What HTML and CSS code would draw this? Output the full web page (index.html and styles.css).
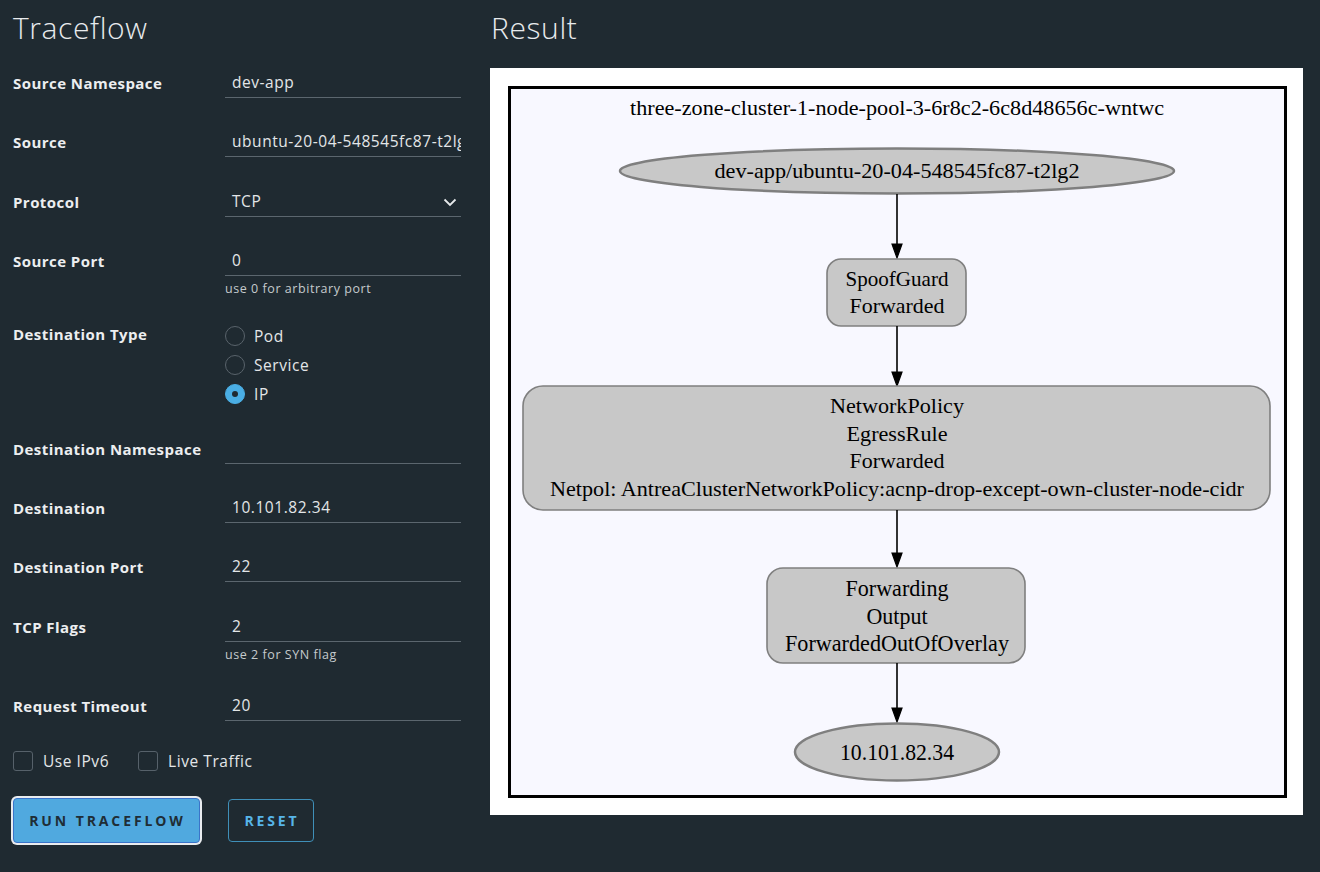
FILE: index.html
```html
<!DOCTYPE html>
<html>
<head>
<meta charset="utf-8">
<link rel="stylesheet" href="styles.css">
</head>
<body>
<div class="page">
  <section class="form-col">
    <h1 class="title">Traceflow</h1>
    <div class="form">
      <div class="row">
        <div class="label">Source Namespace</div>
        <div class="control"><div class="input">dev-app</div></div>
      </div>
      <div class="row">
        <div class="label">Source</div>
        <div class="control"><div class="input">ubuntu-20-04-548545fc87-t2lg2</div></div>
      </div>
      <div class="row">
        <div class="label">Protocol</div>
        <div class="control"><div class="input select">TCP
          <svg class="chevron" width="14" height="9" viewBox="0 0 14 9"><path d="M1.5 1.5 L7 7 L12.5 1.5" fill="none" stroke="#e6e9eb" stroke-width="1.8"/></svg>
        </div></div>
      </div>
      <div class="row">
        <div class="label">Source Port</div>
        <div class="control"><div class="input">0</div><div class="helper">use 0 for arbitrary port</div></div>
      </div>
      <div class="row radio-row">
        <div class="label">Destination Type</div>
        <div class="control radios">
          <div class="radio"><span class="dot"></span>Pod</div>
          <div class="radio"><span class="dot"></span>Service</div>
          <div class="radio checked"><span class="dot"></span>IP</div>
        </div>
      </div>
      <div class="row">
        <div class="label">Destination Namespace</div>
        <div class="control"><div class="input"></div></div>
      </div>
      <div class="row">
        <div class="label">Destination</div>
        <div class="control"><div class="input">10.101.82.34</div></div>
      </div>
      <div class="row">
        <div class="label">Destination Port</div>
        <div class="control"><div class="input">22</div></div>
      </div>
      <div class="row">
        <div class="label">TCP Flags</div>
        <div class="control"><div class="input">2</div><div class="helper">use 2 for SYN flag</div></div>
      </div>
      <div class="row">
        <div class="label">Request Timeout</div>
        <div class="control"><div class="input">20</div></div>
      </div>
      <div class="checks">
        <div class="check"><span class="box"></span>Use IPv6</div>
        <div class="check"><span class="box"></span>Live Traffic</div>
      </div>
      <div class="buttons">
        <button class="btn btn-primary">RUN TRACEFLOW</button>
        <button class="btn btn-outline">RESET</button>
      </div>
    </div>
  </section>
  <section class="result-col">
    <h1 class="title">Result</h1>
    <div class="panel">
      <svg class="graph" width="813" height="747" viewBox="0 0 813 747">
        <rect x="19.5" y="19.5" width="776" height="709" fill="#f8f8ff" stroke="#000" stroke-width="3"/>
        <g font-family="'Liberation Serif', 'Times New Roman', serif" font-size="21" fill="#000" text-anchor="middle">
          <text x="407" y="47" textLength="534" lengthAdjust="spacingAndGlyphs">three-zone-cluster-1-node-pool-3-6r8c2-6c8d48656c-wntwc</text>

          <ellipse cx="407" cy="103" rx="277" ry="22.5" fill="#c8c8c8" stroke="#7f7f7f" stroke-width="2.5"/>
          <text x="407" y="110" textLength="365" lengthAdjust="spacingAndGlyphs">dev-app/ubuntu-20-04-548545fc87-t2lg2</text>

          <line x1="407" y1="126" x2="407" y2="177" stroke="#000" stroke-width="1.6"/>
          <polygon points="402,176 412,176 407,190" fill="#000" stroke="#000" stroke-width="1.2"/>

          <rect x="337" y="191" width="139" height="67" rx="14" fill="#c8c8c8" stroke="#7f7f7f" stroke-width="1.6"/>
          <text x="407" y="218" textLength="103" lengthAdjust="spacingAndGlyphs">SpoofGuard</text>
          <text x="407" y="245" textLength="95" lengthAdjust="spacingAndGlyphs">Forwarded</text>

          <line x1="407" y1="258" x2="407" y2="305" stroke="#000" stroke-width="1.6"/>
          <polygon points="402,304 412,304 407,318" fill="#000" stroke="#000" stroke-width="1.2"/>

          <rect x="33" y="318" width="747" height="124" rx="20" fill="#c8c8c8" stroke="#7f7f7f" stroke-width="1.6"/>
          <text x="407" y="345" textLength="134" lengthAdjust="spacingAndGlyphs">NetworkPolicy</text>
          <text x="407" y="373" textLength="101" lengthAdjust="spacingAndGlyphs">EgressRule</text>
          <text x="407" y="400" textLength="95" lengthAdjust="spacingAndGlyphs">Forwarded</text>
          <text x="407" y="428" textLength="694" lengthAdjust="spacingAndGlyphs">Netpol: AntreaClusterNetworkPolicy:acnp-drop-except-own-cluster-node-cidr</text>

          <line x1="407" y1="442" x2="407" y2="486" stroke="#000" stroke-width="1.6"/>
          <polygon points="402,485 412,485 407,499" fill="#000" stroke="#000" stroke-width="1.2"/>

          <rect x="277" y="500" width="258" height="95" rx="16" fill="#c8c8c8" stroke="#7f7f7f" stroke-width="1.6"/>
          <text x="407" y="528" font-size="23" textLength="103" lengthAdjust="spacingAndGlyphs">Forwarding</text>
          <text x="407" y="556" font-size="23" textLength="61" lengthAdjust="spacingAndGlyphs">Output</text>
          <text x="407" y="583" font-size="23" textLength="224" lengthAdjust="spacingAndGlyphs">ForwardedOutOfOverlay</text>

          <line x1="407" y1="595" x2="407" y2="641" stroke="#000" stroke-width="1.6"/>
          <polygon points="402,640 412,640 407,654" fill="#000" stroke="#000" stroke-width="1.2"/>

          <ellipse cx="407" cy="684" rx="102" ry="28.5" fill="#c8c8c8" stroke="#7f7f7f" stroke-width="2.5"/>
          <text x="407" y="692" font-size="23" textLength="114" lengthAdjust="spacingAndGlyphs">10.101.82.34</text>
        </g>
      </svg>
    </div>
  </section>
</div>
</body>
</html>
```

FILE: styles.css
```css
* { box-sizing: border-box; }
html, body { margin: 0; padding: 0; }
body {
  background: #1f2a31;
  color: #e6e9eb;
  font-family: "Open Sans", "Liberation Sans", sans-serif;
  width: 1320px;
  height: 872px;
  overflow: hidden;
}
.page {
  display: flex;
  padding-left: 13px;
}
.form-col {
  width: 448px;
  flex: none;
}
.result-col {
  margin-left: 29px;
  flex: none;
}
.title {
  margin: 10px 0 0 0;
  height: 36px;
  line-height: 36px;
  font-size: 30px;
  font-weight: 300;
  color: #e8ebed;
  letter-spacing: 0.6px;
}
.result-col .title { margin-left: 1px; }
.form {
  margin-top: 22px;
  display: flex;
  flex-direction: column;
}
.row {
  display: grid;
  grid-template-columns: 212px 236px;
  margin-bottom: 29.3px;
}
.label {
  font-size: 15px;
  font-weight: 700;
  line-height: 30px;
  color: #eceef0;
  letter-spacing: 0.45px;
  white-space: nowrap;
}
.input {
  height: 30px;
  line-height: 29px;
  padding-left: 7px;
  padding-right: 3px;
  border-bottom: 1px solid #5b666e;
  font-size: 15.5px;
  letter-spacing: 0.55px;
  color: #e3e6e8;
  white-space: nowrap;
  overflow: hidden;
  position: relative;
}
.select .chevron {
  position: absolute;
  right: 4px;
  top: 11px;
}
.helper {
  margin-top: 6px;
  font-size: 12.5px;
  line-height: 14px;
  letter-spacing: 0.55px;
  color: #c5cacd;
}
.radio-row {
  margin-top: -4px;
  margin-bottom: 25.5px;
}
.radio-row .label { line-height: 27px; }
.radios { display: flex; flex-direction: column; }
.radio {
  height: 29px;
  display: flex;
  align-items: center;
  font-size: 15.5px;
  letter-spacing: 0.55px;
  color: #e3e6e8;
}
.radio .dot {
  width: 20px;
  height: 20px;
  border-radius: 50%;
  border: 1px solid #59636b;
  margin-right: 9px;
  flex: none;
  position: relative;
}
.radio.checked .dot {
  background: #4aaee4;
  border-color: #4aaee4;
}
.radio.checked .dot::after {
  content: "";
  position: absolute;
  left: 6px;
  top: 6px;
  width: 6px;
  height: 6px;
  border-radius: 50%;
  background: #1f2a31;
}
.checks {
  display: flex;
  height: 20px;
  margin-top: 0.5px;
}
.check {
  display: flex;
  align-items: center;
  font-size: 15.5px;
  letter-spacing: 0.55px;
  color: #e3e6e8;
  margin-right: 29px;
}
.check .box {
  width: 20px;
  height: 20px;
  border: 1px solid #56616a;
  border-radius: 3px;
  margin-right: 10px;
  flex: none;
}
.buttons {
  display: flex;
  align-items: center;
  margin-top: 27px;
}
.btn {
  font-family: "Open Sans", "Liberation Sans", sans-serif;
  font-size: 14px;
  font-weight: 700;
  letter-spacing: 2.9px;
  border-radius: 4px;
  cursor: pointer;
  padding: 0 0 0 2px;
}
.btn-primary {
  width: 187px;
  height: 45px;
  background: #50a9df;
  color: #1f2d36;
  border: 1px solid #3a74c9;
  box-shadow: 0 0 0 2px #e9ecef;
}
.btn-outline {
  margin-left: 28px;
  width: 86px;
  height: 43px;
  background: transparent;
  color: #57b5e8;
  border: 1px solid #3f8fb8;
}
.panel {
  margin-top: 22px;
  width: 813px;
  height: 747px;
  background: #ffffff;
}
.graph { display: block; }
```
